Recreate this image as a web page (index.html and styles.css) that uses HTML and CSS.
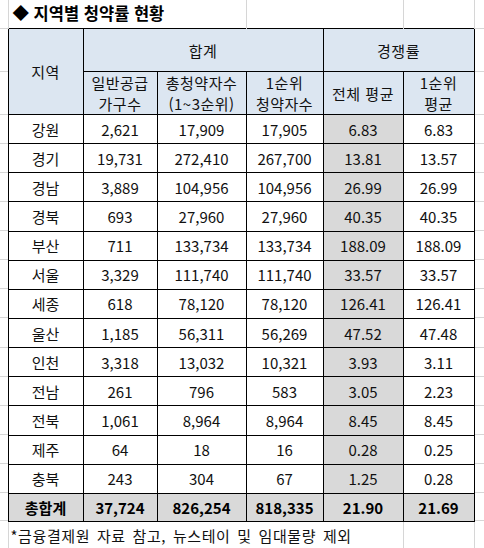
FILE: index.html
```html
<!DOCTYPE html>
<html lang="ko">
<head>
<meta charset="utf-8">
<title>지역별 청약률 현황</title>
<link rel="stylesheet" href="styles.css">
</head>
<body>
<table class="sheet">
  <colgroup>
    <col class="c-ml"><col class="c1"><col class="c2"><col class="c3"><col class="c4"><col class="c5"><col class="c6"><col class="c-mr">
  </colgroup>
  <tr class="r-title">
    <td class="m"></td>
    <td class="title g" colspan="3">◆ 지역별 청약률 현황</td>
    <td class="g" colspan="2"></td>
    <td class="g"></td>
    <td class="m"></td>
  </tr>
  <tr class="r-h1">
    <td class="m"></td>
    <th class="hd" rowspan="2">지역</th>
    <th class="hd" colspan="3">합계</th>
    <th class="hd" colspan="2">경쟁률</th>
    <td class="m"></td>
  </tr>
  <tr class="r-h2">
    <td class="m"></td>
    <th class="hd">일반공급<br>가구수</th>
    <th class="hd">총청약자수<br>(1~3순위)</th>
    <th class="hd">1순위<br>청약자수</th>
    <th class="hd">전체 평균</th>
    <th class="hd">1순위<br>평균</th>
    <td class="m"></td>
  </tr>
  <tr class="r-d"><td class="m"></td><td>강원</td><td>2,621</td><td>17,909</td><td>17,905</td><td class="sh">6.83</td><td>6.83</td><td class="m"></td></tr>
  <tr class="r-d"><td class="m"></td><td>경기</td><td>19,731</td><td>272,410</td><td>267,700</td><td class="sh">13.81</td><td>13.57</td><td class="m"></td></tr>
  <tr class="r-d"><td class="m"></td><td>경남</td><td>3,889</td><td>104,956</td><td>104,956</td><td class="sh">26.99</td><td>26.99</td><td class="m"></td></tr>
  <tr class="r-d"><td class="m"></td><td>경북</td><td>693</td><td>27,960</td><td>27,960</td><td class="sh">40.35</td><td>40.35</td><td class="m"></td></tr>
  <tr class="r-d"><td class="m"></td><td>부산</td><td>711</td><td>133,734</td><td>133,734</td><td class="sh">188.09</td><td>188.09</td><td class="m"></td></tr>
  <tr class="r-d"><td class="m"></td><td>서울</td><td>3,329</td><td>111,740</td><td>111,740</td><td class="sh">33.57</td><td>33.57</td><td class="m"></td></tr>
  <tr class="r-d"><td class="m"></td><td>세종</td><td>618</td><td>78,120</td><td>78,120</td><td class="sh">126.41</td><td>126.41</td><td class="m"></td></tr>
  <tr class="r-d"><td class="m"></td><td>울산</td><td>1,185</td><td>56,311</td><td>56,269</td><td class="sh">47.52</td><td>47.48</td><td class="m"></td></tr>
  <tr class="r-d"><td class="m"></td><td>인천</td><td>3,318</td><td>13,032</td><td>10,321</td><td class="sh">3.93</td><td>3.11</td><td class="m"></td></tr>
  <tr class="r-d"><td class="m"></td><td>전남</td><td>261</td><td>796</td><td>583</td><td class="sh">3.05</td><td>2.23</td><td class="m"></td></tr>
  <tr class="r-d"><td class="m"></td><td>전북</td><td>1,061</td><td>8,964</td><td>8,964</td><td class="sh">8.45</td><td>8.45</td><td class="m"></td></tr>
  <tr class="r-d"><td class="m"></td><td>제주</td><td>64</td><td>18</td><td>16</td><td class="sh">0.28</td><td>0.25</td><td class="m"></td></tr>
  <tr class="r-d"><td class="m"></td><td>충북</td><td>243</td><td>304</td><td>67</td><td class="sh">1.25</td><td>0.28</td><td class="m"></td></tr>
  <tr class="r-total"><td class="m"></td><td class="sh">총합계</td><td class="sh">37,724</td><td class="sh">826,254</td><td class="sh">818,335</td><td class="sh">21.90</td><td class="sh">21.69</td><td class="m"></td></tr>
  <tr class="r-foot">
    <td class="m"></td>
    <td class="foot g" colspan="5">*금융결제원 자료 참고, 뉴스테이 및 임대물량 제외</td>
    <td class="g"></td>
    <td class="m"></td>
  </tr>
</table>
</body>
</html>
```

FILE: styles.css
```css
html, body {
  margin: 0;
  padding: 0;
  background: #ffffff;
}

body {
  font-family: "Noto Sans CJK KR", "Noto Sans", sans-serif;
  font-size: 15px;
  color: #111111;
}

.sheet {
  border-collapse: collapse;
  table-layout: fixed;
  width: 484px;
}

.c-ml { width: 8px; }
.c1 { width: 75px; }
.c2 { width: 74px; }
.c3 { width: 89px; }
.c4 { width: 77px; }
.c5 { width: 80px; }
.c6 { width: 71px; }
.c-mr { width: 10px; }

.sheet td,
.sheet th {
  border: 1px solid #000000;
  padding: 0;
  text-align: center;
  vertical-align: middle;
  font-weight: normal;
  line-height: 21px;
  white-space: nowrap;
  overflow: visible;
}

/* margin cells outside the table: only faint sheet gridlines */
.sheet td.m {
  border: none;
  background: linear-gradient(#d6d6d6, #d6d6d6) left bottom / 100% 1px no-repeat;
}

/* cells outside the bordered block show gridlines only */
.sheet td.g {
  border-top: none;
  border-bottom: none;
  border-left: 1px solid #d6d6d6;
  border-right: 1px solid #d6d6d6;
}

.r-title td { height: 26px; }
.r-h1 th, .r-h1 td { height: 42px; }
.r-h2 th, .r-h2 td { height: 42px; }
.r-d td { height: 28.15px; }
.r-total td { height: 27px; }
.r-foot td { height: 28px; }

.sheet td.title {
  text-align: left;
  padding-left: 4px;
  padding-bottom: 2px;
  font-weight: bold;
  font-size: 16.5px;
  color: #000000;
}

.sheet th.hd {
  background: #dce6f1;
  color: #111111;
  letter-spacing: 0.5px;
}

.sheet td.sh {
  background: #d9d9d9;
}

.r-total td {
  font-weight: bold;
  color: #000000;
}

.sheet td.foot {
  text-align: left;
  padding-left: 2px;
  letter-spacing: 0.6px;
  word-spacing: 2px;
}
```
